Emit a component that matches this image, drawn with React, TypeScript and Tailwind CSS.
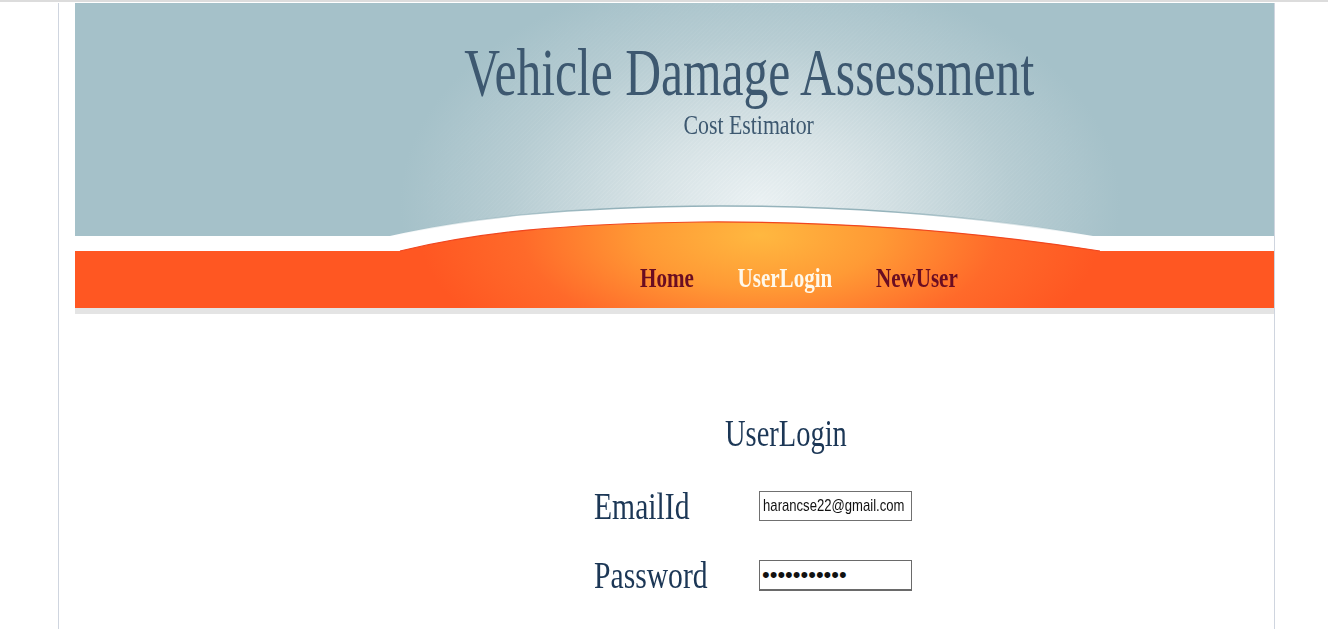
import React from "react";

function HeaderArt() {
  return (
    <svg
      className="absolute inset-0 w-full h-full"
      viewBox="0 0 1199 305"
      preserveAspectRatio="none"
      aria-hidden="true"
    >
      <defs>
        <radialGradient
          id="hl"
          gradientUnits="userSpaceOnUse"
          cx="685"
          cy="200"
          r="360"
          gradientTransform="translate(685 200) scale(1 0.65) translate(-685 -200)"
        >
          <stop offset="0" stopColor="#e9f0f2" />
          <stop offset="0.3" stopColor="#d6e2e5" />
          <stop offset="0.7" stopColor="#b6ccd2" />
          <stop offset="1" stopColor="#a5c1c9" />
        </radialGradient>
        <radialGradient
          id="hlmask"
          gradientUnits="userSpaceOnUse"
          cx="685"
          cy="200"
          r="360"
          gradientTransform="translate(685 200) scale(1 0.65) translate(-685 -200)"
        >
          <stop offset="0" stopColor="#fff" />
          <stop offset="1" stopColor="#000" />
        </radialGradient>
        <mask id="m">
          <rect x="0" y="0" width="1199" height="233" fill="url(#hlmask)" />
        </mask>
        <pattern
          id="hatch"
          width="3"
          height="3"
          patternUnits="userSpaceOnUse"
          patternTransform="rotate(45)"
        >
          <line x1="0" y1="0" x2="0" y2="3" stroke="#ffffff" strokeWidth="1" />
        </pattern>
        <linearGradient id="edge" gradientUnits="userSpaceOnUse" x1="315" y1="0" x2="1018" y2="0">
          <stop offset="0" stopColor="#8aabb4" stopOpacity="0" />
          <stop offset="0.3" stopColor="#8aabb4" stopOpacity="0.9" />
          <stop offset="0.7" stopColor="#8aabb4" stopOpacity="0.9" />
          <stop offset="1" stopColor="#8aabb4" stopOpacity="0" />
        </linearGradient>
        <radialGradient
          id="or"
          gradientUnits="userSpaceOnUse"
          cx="685"
          cy="232"
          r="340"
          gradientTransform="translate(685 232) scale(1 0.45) translate(-685 -232)"
        >
          <stop offset="0" stopColor="#ffb840" />
          <stop offset="0.35" stopColor="#ff9a35" />
          <stop offset="0.7" stopColor="#ff6a2a" />
          <stop offset="1" stopColor="#ff5722" />
        </radialGradient>
      </defs>
      <rect x="0" y="0" width="1199" height="233" fill="#a5c1c9" />
      <rect x="0" y="0" width="1199" height="233" fill="url(#hl)" />
      <rect
        x="0"
        y="0"
        width="1199"
        height="233"
        fill="url(#hatch)"
        opacity="0.35"
        mask="url(#m)"
      />
      <rect x="0" y="233" width="1199" height="15" fill="#ffffff" />
      <path
        d="M 300 234 L 315 233 C 395 215, 485 204, 645 203 C 805 203, 925 217, 1018 233 L 1030 234 Z"
        fill="#ffffff"
      />
      <path
        d="M 315 233 C 395 215, 485 204, 645 203 C 805 203, 925 217, 1018 233"
        fill="none"
        stroke="url(#edge)"
        strokeWidth="1.5"
      />
      <path
        d="M 310 249 L 325 248 C 405 229, 485 221, 625 219 C 775 218, 905 229, 1025 248 L 1040 249 L 1199 249 L 1199 305 L 0 305 L 0 248 Z"
        fill="url(#or)"
      />
      <rect x="0" y="248" width="1199" height="57" fill="url(#or)" />
      <path
        d="M 325 248 C 405 229, 485 221, 625 219 C 775 218, 905 229, 1025 248"
        fill="none"
        stroke="#f0461f"
        strokeWidth="1.2"
      />
    </svg>
  );
}

export default function App() {
  const serif = "font-['Liberation_Serif','Times_New_Roman',serif]";
  return (
    <div className="min-h-screen bg-white">
      <div className="h-[2px] bg-[#dcdcdc]" />
      <div className="ml-[58px] mt-[1px] w-[1217px] min-h-[626px] border-l border-r border-[#cfd5df] pl-[16px]">
        <header className="w-[1199px]">
          <div className="relative h-[305px]">
            <HeaderArt />
            <div className="relative h-[248px] flex flex-col items-center pl-[149px] pt-[36px]">
              <h1
                className={`${serif} inline-block scale-x-[0.74] text-[67px] leading-none font-normal text-[#3d5870] whitespace-nowrap`}
              >
                Vehicle Damage Assessment
              </h1>
              <p
                className={`${serif} mt-[5px] inline-block scale-x-[0.78] text-[28px] leading-none text-[#3d5870] whitespace-nowrap`}
              >
                Cost Estimator
              </p>
            </div>
            <nav className="relative h-[57px] pt-[14px] pl-[565px]">
              <div
                className={`${serif} flex gap-[56px] origin-left scale-x-[0.78] text-[27px] leading-none font-bold whitespace-nowrap`}
              >
                <a className="text-[#6a0d22]">Home</a>
                <a className="text-[#fff8ea]">UserLogin</a>
                <a className="text-[#6a0d22]">NewUser</a>
              </div>
            </nav>
          </div>
          <div className="h-[6px] bg-[#e4e4e4]" />
        </header>

        <main className="pt-[101px]">
          <h2
            className={`${serif} ml-[650px] inline-block origin-left scale-x-[0.77] text-[37px] leading-none font-normal text-[#1c3756] whitespace-nowrap`}
          >
            UserLogin
          </h2>
          <div className="ml-[519px] mt-[35px] flex items-center">
            <div className="w-[165px]">
              <span
                className={`${serif} inline-block origin-left scale-x-[0.78] text-[38px] leading-none text-[#1c3756] whitespace-nowrap`}
              >
                EmailId
              </span>
            </div>
            <div className="w-[153px] h-[30px] border border-[#707070] overflow-hidden bg-white">
              <input
                type="text"
                readOnly
                value="harancse22@gmail.com"
                className="block w-[196px] h-[28px] origin-left scale-x-[0.77] pl-[4px] font-['Liberation_Sans',Arial,sans-serif] text-[17px] text-[#111] outline-none bg-transparent"
              />
            </div>
          </div>
          <div className="ml-[519px] mt-[31px] flex items-center">
            <div className="w-[165px]">
              <span
                className={`${serif} inline-block origin-left scale-x-[0.78] text-[38px] leading-none text-[#1c3756] whitespace-nowrap`}
              >
                Password
              </span>
            </div>
            <div className="w-[153px] h-[31px] border border-b-2 border-[#6a6a6a] overflow-hidden bg-white">
              <input
                type="password"
                readOnly
                value="haran123456"
                className="block w-full h-[28px] pl-[2px] font-['Liberation_Sans',Arial,sans-serif] text-[22px] text-[#111] outline-none bg-transparent"
              />
            </div>
          </div>
        </main>
      </div>
    </div>
  );
}
